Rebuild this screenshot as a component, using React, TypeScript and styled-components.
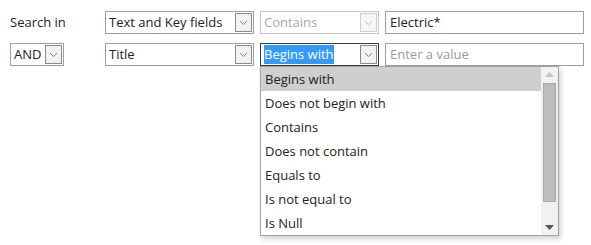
import React from "react";
import styled, { createGlobalStyle } from "styled-components";

const Global = createGlobalStyle`
  html, body { margin: 0; padding: 0; background: #fff; }
  body { font-family: "Open Sans", "Noto Sans", "DejaVu Sans", sans-serif; font-size: 13px; color: #222; }
  * { box-sizing: border-box; }
`;

const Page = styled.div`
  width: 591px;
  height: 245px;
  position: relative;
`;

const Form = styled.div`
  display: grid;
  grid-template-columns: 89px 149px 119px 199px;
  column-gap: 6px;
  row-gap: 9px;
  padding: 11px 0 0 10px;
`;

const Label = styled.div`
  height: 23px;
  line-height: 16px;
  padding-top: 3px;
  color: #222;
  white-space: nowrap;
`;

const Cell = styled.div`
  position: relative;
  display: flex;
  align-items: flex-start;
`;

const SelectBox = styled.div<{ $disabled?: boolean; $focused?: boolean; $w?: number }>`
  display: flex;
  align-items: center;
  height: 23px;
  width: ${(p) => (p.$w ? `${p.$w}px` : "100%")};
  border: 1px solid ${(p) => (p.$focused ? "#3a3a3a" : p.$disabled ? "#c6c6c6" : "#9e9e9e")};
  background: #fff;
  padding: 0 1px 0 3px;
  color: ${(p) => (p.$disabled ? "#a8a8a8" : "#222")};
`;

const Value = styled.span<{ $selected?: boolean }>`
  flex: 1;
  white-space: nowrap;
  overflow: hidden;
  line-height: 19px;
  span {
    ${(p) => (p.$selected ? "background: #3399ff; color: #fff;" : "")}
    display: inline-block;
    line-height: 19px;
  }
`;

const Arrow = styled.div<{ $disabled?: boolean }>`
  width: 17px;
  height: 19px;
  border: 1px solid ${(p) => (p.$disabled ? "#cfcfcf" : "#8a8a8a")};
  background: ${(p) => (p.$disabled ? "#f6f6f6" : "#f2f2f2")};
  display: flex;
  align-items: center;
  justify-content: center;
  flex: none;
`;

const Input = styled.div<{ $placeholder?: boolean }>`
  height: 23px;
  border: 1px solid #9e9e9e;
  padding: 0 4px;
  line-height: 21px;
  color: ${(p) => (p.$placeholder ? "#9a9a9a" : "#222")};
  white-space: nowrap;
`;

const List = styled.div`
  position: absolute;
  left: 0;
  top: 23px;
  width: 299px;
  height: 170px;
  border: 1px solid #a2a2a2;
  background: #fff;
  box-shadow: 2px 3px 5px rgba(0, 0, 0, 0.18);
  display: flex;
  z-index: 10;
`;

const Items = styled.div`
  flex: 1;
  display: flex;
  flex-direction: column;
`;

const Item = styled.div<{ $active?: boolean }>`
  height: 24px;
  line-height: 24px;
  padding-left: 4px;
  color: #222;
  background: ${(p) => (p.$active ? "#cfcfcf" : "transparent")};
  white-space: nowrap;
`;

const Scrollbar = styled.div`
  width: 17px;
  background: #f1f1f1;
  display: flex;
  flex-direction: column;
  align-items: center;
`;

const ScrollBtn = styled.div`
  height: 15px;
  width: 100%;
  display: flex;
  align-items: center;
  justify-content: center;
`;

const Thumb = styled.div`
  width: 13px;
  height: 119px;
  margin-top: 1px;
  background: #bdbdbd;
  border: 1px solid #a9a9a9;
`;

const Spacer = styled.div`
  flex: 1;
`;

const Chevron = ({ disabled }: { disabled?: boolean }) => (
  <svg width="9" height="6" viewBox="0 0 9 6">
    <path d="M1 1 L4.5 4.5 L8 1" fill="none" stroke={disabled ? "#c4c4c4" : "#858585"} strokeWidth="1" />
  </svg>
);

const Select = ({
  value,
  disabled,
  focused,
  selected,
  w,
}: {
  value: string;
  disabled?: boolean;
  focused?: boolean;
  selected?: boolean;
  w?: number;
}) => (
  <SelectBox $disabled={disabled} $focused={focused} $w={w}>
    <Value $selected={selected}>
      <span>{value}</span>
    </Value>
    <Arrow $disabled={disabled}>
      <Chevron disabled={disabled} />
    </Arrow>
  </SelectBox>
);

const options = [
  "Begins with",
  "Does not begin with",
  "Contains",
  "Does not contain",
  "Equals to",
  "Is not equal to",
  "Is Null",
];

export default function App() {
  return (
    <Page>
      <Global />
      <Form>
        <Cell>
          <Label>Search in</Label>
        </Cell>
        <Select value="Text and Key fields" />
        <Select value="Contains" disabled />
        <Input>Electric*</Input>

        <Cell>
          <Select value="AND" w={54} />
        </Cell>
        <Select value="Title" />
        <Cell>
          <Select value="Begins with" focused selected />
          <List>
            <Items>
              {options.map((o, i) => (
                <Item key={o} $active={i === 0}>
                  {o}
                </Item>
              ))}
            </Items>
            <Scrollbar>
              <ScrollBtn>
                <svg width="9" height="5" viewBox="0 0 9 5">
                  <path d="M0 5 L4.5 0 L9 5 Z" fill="#c4c4c4" />
                </svg>
              </ScrollBtn>
              <Thumb />
              <Spacer />
              <ScrollBtn>
                <svg width="9" height="5" viewBox="0 0 9 5">
                  <path d="M0 0 L4.5 5 L9 0 Z" fill="#555" />
                </svg>
              </ScrollBtn>
            </Scrollbar>
          </List>
        </Cell>
        <Input $placeholder>Enter a value</Input>
      </Form>
    </Page>
  );
}
